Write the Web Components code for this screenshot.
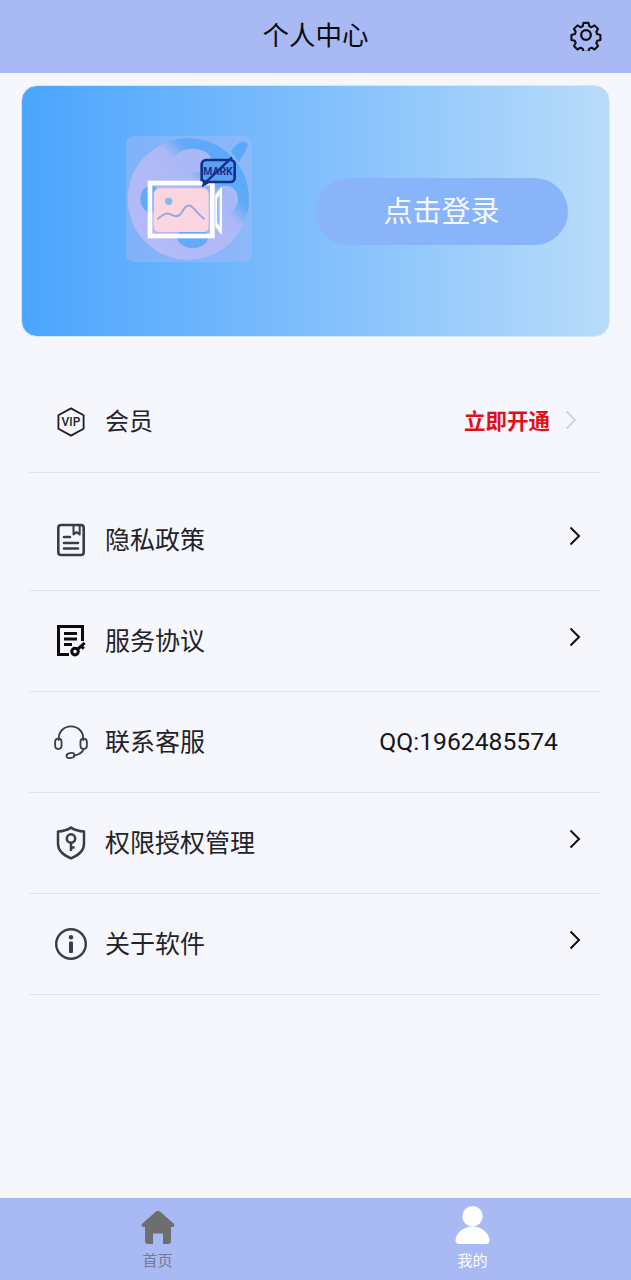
<!DOCTYPE html>
<html lang="zh">
<head>
<meta charset="utf-8">
<title>个人中心</title>
<style>
  html, body { margin: 0; height: 100%; }
  body {
    background: #f5f7fc;
    font-family: "Noto Sans CJK SC", "Noto Sans", sans-serif;
    color: #222;
  }
  user-center {
    display: flex;
    flex-direction: column;
    height: 1280px;
  }
</style>
</head>
<body>
<user-center>
  <top-bar title="个人中心"></top-bar>
  <login-card></login-card>
  <menu-list>
    <menu-row label="会员" first chevron="muted" label-size="24">
      <svg slot="icon" width="30" height="30" viewBox="0 0 30 30" fill="none" stroke="#1f1f24" stroke-width="1.8" stroke-linejoin="round"><path d="M15 1.4 27.6 8.3v13.4L15 28.6 2.4 21.7V8.3z"/><text x="15" y="19.3" text-anchor="middle" font-family="Roboto, sans-serif" font-size="12" font-weight="500" fill="#1f1f24" stroke="none">VIP</text></svg>
      <span slot="trailing" style="color:#e0101a;font-size:21.5px;font-weight:700;margin-bottom:6px">立即开通</span>
    </menu-row>
    <menu-row label="隐私政策">
      <svg slot="icon" width="30" height="34" viewBox="0 0 30 34" fill="none" stroke="#3a3d46" stroke-width="2.6" stroke-linejoin="round" stroke-linecap="round"><rect x="2.3" y="2" width="25.4" height="30" rx="2.8"/><path d="M17.5 2.2v9.3l3.1-2.4 3.1 2.4V2.2" stroke-width="2"/><path d="M8 14h6M8 20h14M8 25.5h14"/></svg>
    </menu-row>
    <menu-row label="服务协议">
      <svg slot="icon" width="30" height="34" viewBox="0 0 30 34" fill="none" stroke="#0c0c0e" stroke-width="3"><path d="M13 30.5H2.5V2.5h24V17"/><path d="M8 9.5h13M8 15h13M8 20.5h8"/><circle cx="19" cy="27.6" r="3.3"/><path d="M21.5 25.3l7.2-6.4M25 22l2.8 2.8"/></svg>
    </menu-row>
    <menu-row label="联系客服" chevron="none">
      <svg slot="icon" width="34" height="34" viewBox="0 0 36 36" fill="none" stroke="#3a3d46" stroke-width="1.9" stroke-linecap="round"><path d="M5 16V14C5 6.8 10.8 1.5 18 1.5S31 6.8 31 14v2"/><rect x="1.2" y="14.5" width="6.8" height="11" rx="3.4"/><rect x="28" y="14.5" width="6.8" height="11" rx="3.4"/><path d="M31 25.5c-.4 4-4.2 5.6-10 6.8"/><ellipse cx="17.5" cy="32.3" rx="4.3" ry="2.6" transform="rotate(-12 17.5 32.3)"/></svg>
      <span slot="trailing" style="font-family:Roboto,sans-serif;font-size:24.7px;color:#16161a;margin:0 43px 2px 0">QQ:1962485574</span>
    </menu-row>
    <menu-row label="权限授权管理">
      <svg slot="icon" width="30" height="34" viewBox="0 0 30 34" fill="none" stroke="#3a3d46" stroke-width="2.5" stroke-linejoin="round"><path d="M15 1.6c3.6 2.4 8 3.6 13 3.8v12.4c0 6.6-5.6 11.6-13 14.6C7.6 29.4 2 24.4 2 17.8V5.4C7 5.2 11.4 4 15 1.6z"/><circle cx="15" cy="12.5" r="4.2"/><path d="M15 16.7V25M15 21.5h3.5"/></svg>
    </menu-row>
    <menu-row label="关于软件">
      <svg slot="icon" width="34" height="34" viewBox="0 0 34 34" fill="none"><circle cx="17" cy="17" r="14.8" stroke="#3a3d46" stroke-width="2.4"/><circle cx="17" cy="10.3" r="2.2" fill="#3a3d46"/><rect x="15" y="14.5" width="4" height="11.5" rx="1" fill="#3a3d46"/></svg>
    </menu-row>
  </menu-list>
  <tab-bar>
    <tab-item label="首页" color="#757a8c">
      <svg slot="icon" width="34" height="35" viewBox="0 0 34 35" style="margin-bottom:1px"><path fill="#6e6e6e" d="M15 1.6a3 3 0 0 1 4 0L32.6 13.5c1.6 1.6.6 3.5-1.2 3.5H30V31a3 3 0 0 1-3 3h-5V24.5a1 1 0 0 0-1-1h-8a1 1 0 0 0-1 1V34H7a3 3 0 0 1-3-3V17H2.6c-1.800 0-2.800-1.900-1.200-3.500z"/></svg>
    </tab-item>
    <tab-item label="我的" color="#ffffff">
      <svg slot="icon" width="35" height="40" viewBox="0 0 36 40" style="margin-bottom:1px"><circle cx="18" cy="11" r="10.5" fill="#fff"/><path fill="#fff" d="M18 21.5c9.500 0 17.500 7 17.500 14.500 0 2.200-1.600 3.500-3.500 3.500H4c-1.900 0-3.500-1.300-3.500-3.500C.5 28.500 8.500 21.500 18 21.500z"/></svg>
    </tab-item>
  </tab-bar>
</user-center>

<script>
class TopBar extends HTMLElement {
    constructor() {
        super();
        this.attachShadow({ mode: 'open' });
    }

    connectedCallback() {
        const title = this.getAttribute('title');
        this.removeAttribute('title');
        this.shadowRoot.innerHTML = `
            <style>
                :host {
                    display: flex;
                    align-items: center;
                    justify-content: center;
                    flex: 0 0 73px;
                    background: #a9b9f3;
                    position: relative;
                }
                h1 {
                    margin: 0 0 4px;
                    font-size: 26.5px;
                    font-weight: 400;
                    color: #0b0b0f;
                    line-height: 1;
                }
                .gear {
                    position: absolute;
                    right: 29px;
                    top: 19px;
                }
            </style>
            <h1>${title}</h1>
            <svg class="gear" width="32" height="32" viewBox="0 0 32 32" fill="none" stroke="#101014" stroke-width="2.3" stroke-linejoin="round">
                <path d="M13.2 2.5h5.600l.9 3.800 2.500 1 3.300-2 3.900 3.900-2 3.300 1 2.500 3.600.9v5.600l-3.600.9-1 2.500 2 3.300-3.900 3.900-3.300-2-2.500 1-.9 3.600h-5.600l-.9-3.600-2.500-1-3.300 2-3.900-3.900 2-3.300-1-2.500-3.800-.9v-5.600l3.800-.9 1-2.500-2-3.300 3.900-3.900 3.300 2 2.500-1z" transform="translate(1.6 1.6) scale(.9)"/>
                <circle cx="16" cy="16" r="4.8"/>
            </svg>
        `;
    }
}

class LoginCard extends HTMLElement {
    constructor() {
        super();
        this.attachShadow({ mode: 'open' });
    }

    connectedCallback() {
        this.shadowRoot.innerHTML = `
            <style>
                :host {
                    display: flex;
                    align-items: center;
                    box-sizing: border-box;
                    height: 252px;
                    margin: 12px 21px 0;
                    padding: 0 41px 0 104px;
                    border: 1px solid #d5e6fb;
                    border-radius: 16px;
                    background: linear-gradient(90deg, #4ba5fe 0%, #7ebdfc 48%, #b9dcfa 100%);
                }
                .logo {
                    flex: 0 0 126px;
                    display: block;
                    margin-bottom: 24px;
                }
                button {
                    margin-left: auto;
                    width: 253px;
                    height: 67px;
                    border: 0;
                    border-radius: 34px;
                    background: #8ab4fa;
                    color: #f4f8ff;
                    font: 400 29px "Noto Sans CJK SC", sans-serif;
                    padding: 0 0 5px;
                }
            </style>
            <svg class="logo" width="126" height="126" viewBox="50 48 378 378">
                <defs>
                    <linearGradient id="reel" x1="0" y1="1" x2="1" y2="0">
                        <stop offset="0" stop-color="#b6bcf6"/>
                        <stop offset=".6" stop-color="#adb9f6"/>
                        <stop offset=".7" stop-color="#60aaf7"/>
                        <stop offset="1" stop-color="#58a8f7"/>
                    </linearGradient>
                </defs>
                <rect x="50" y="48" width="378" height="378" rx="22" fill="#aab9f6" fill-opacity=".45"/>
                <circle cx="237" cy="237" r="182" fill="url(#reel)"/>
                <path d="M365 95c10-16 22-30 40-30 12 0 12 12 6 22-8 14-16 26-22 40z" fill="#5aa9f7"/>
                <ellipse cx="250" cy="122" rx="56" ry="36" fill="#a9b8f6"/>
                <ellipse cx="125" cy="237" rx="32" ry="40" fill="#62abf7"/>
                <ellipse cx="350" cy="237" rx="36" ry="40" fill="#a9b8f6"/>
                <ellipse cx="250" cy="352" rx="46" ry="32" fill="#62abf7"/>
                <rect x="122" y="189" width="187" height="159" fill="none" stroke="#fff" stroke-width="14"/>
                <path d="M318 224l20-26v148l-20-26z" fill="#fff"/>
                <path d="M323 236l8-10v92l-8-10z" fill="#9cbcf6"/>
                <rect x="133" y="205" width="165" height="131" rx="16" fill="#fbd6e0"/>
                <circle cx="178" cy="244" r="11" fill="#8cb6ea"/>
                <path d="M146 296c14-12 26-20 40-12 14 8 24 6 32-8 10-18 20-26 32-14 10 10 20 24 34 34" fill="none" stroke="#9aa8dc" stroke-width="6" stroke-linecap="round"/>
                <path d="M291 120h72a13 13 0 0 1 13 13v40a13 13 0 0 1-13 13h-66l-14 8 2-10-8-4v-47a13 13 0 0 1 14-13z" fill="#5b9ff0" stroke="#14308f" stroke-width="8"/>
                <text x="326" y="166" text-anchor="middle" font-family="Roboto, sans-serif" font-size="31" font-weight="700" fill="#14308f">MARK</text>
                <path d="M288 188l80-76" stroke="#14308f" stroke-width="7"/>
            </svg>
            <button>点击登录</button>
        `;
    }
}

class MenuList extends HTMLElement {
    constructor() {
        super();
        this.attachShadow({ mode: 'open' });
    }

    connectedCallback() {
        this.shadowRoot.innerHTML = `
            <style>
                :host {
                    display: flex;
                    flex-direction: column;
                    flex: 1 1 auto;
                    margin: 35px 30px 0 29px;
                }
            </style>
            <slot></slot>
        `;
    }
}

class MenuRow extends HTMLElement {
    constructor() {
        super();
        this.attachShadow({ mode: 'open' });
    }

    connectedCallback() {
        const label = this.getAttribute('label');
        const chevron = this.getAttribute('chevron') || 'dark';
        const labelSize = this.getAttribute('label-size') || '25';
        this.shadowRoot.innerHTML = `
            <style>
                :host {
                    display: flex;
                    align-items: center;
                    box-sizing: border-box;
                    height: 101px;
                    border-bottom: 1px solid #e2e4ea;
                }
                :host([first]) {
                    margin-bottom: 17px;
                }
                .icon {
                    flex: 0 0 76px;
                    box-sizing: border-box;
                    padding-left: 8px;
                    display: flex;
                    justify-content: center;
                }
                .label {
                    font-size: ${labelSize}px;
                    line-height: 1;
                    margin-bottom: 4px;
                    color: #222228;
                }
                .trailing {
                    margin-left: auto;
                    display: flex;
                    align-items: center;
                }
                .chevron {
                    margin: -8px 19px 0 12px;
                    display: ${chevron === 'none' ? 'none' : 'block'};
                }
                :host([first]) .chevron { margin: 0 23px 4px 14px; }
            </style>
            <div class="icon"><slot name="icon"></slot></div>
            <span class="label">${label}</span>
            <div class="trailing">
                <slot name="trailing"></slot>
                <svg class="chevron" width="14" height="20" viewBox="0 0 14 20" fill="none"
                    stroke="${chevron === 'muted' ? '#d3d5db' : '#101014'}" stroke-width="2">
                    <path d="M2.5 1.5 11 10 2.5 18.5"/>
                </svg>
            </div>
        `;
    }
}

class TabBar extends HTMLElement {
    constructor() {
        super();
        this.attachShadow({ mode: 'open' });
    }

    connectedCallback() {
        this.shadowRoot.innerHTML = `
            <style>
                :host {
                    display: grid;
                    grid-template-columns: 1fr 1fr;
                    flex: 0 0 82px;
                    padding-right: 1px;
                    background: #a9b9f3;
                }
            </style>
            <slot></slot>
        `;
    }
}

class TabItem extends HTMLElement {
    constructor() {
        super();
        this.attachShadow({ mode: 'open' });
    }

    connectedCallback() {
        const label = this.getAttribute('label');
        const color = this.getAttribute('color');
        this.shadowRoot.innerHTML = `
            <style>
                :host {
                    display: flex;
                    flex-direction: column;
                    align-items: center;
                    justify-content: flex-end;
                    padding-bottom: 10px;
                    gap: 4px;
                }
                .icon {
                    display: flex;
                    height: 40px;
                    align-items: flex-end;
                }
                span {
                    font-size: 15px;
                    line-height: 20px;
                    color: ${color};
                }
            </style>
            <div class="icon"><slot name="icon"></slot></div>
            <span>${label}</span>
        `;
    }
}

customElements.define('top-bar', TopBar);
customElements.define('login-card', LoginCard);
customElements.define('menu-list', MenuList);
customElements.define('menu-row', MenuRow);
customElements.define('tab-bar', TabBar);
customElements.define('tab-item', TabItem);
</script>
</body>
</html>
